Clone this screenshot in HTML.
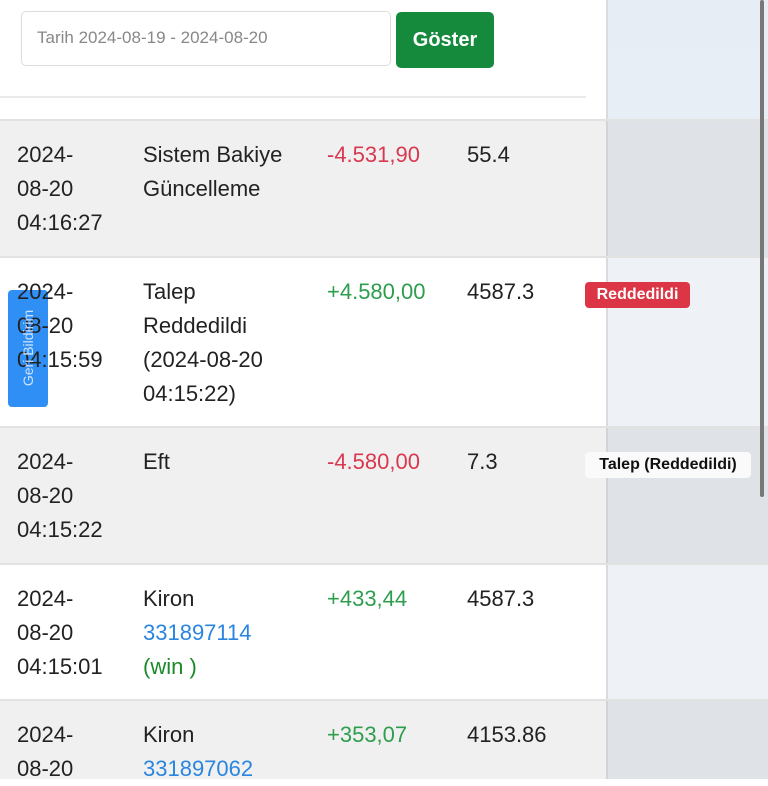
<!DOCTYPE html>
<html><head><meta charset="utf-8"><style>
*{margin:0;padding:0;box-sizing:border-box}
body{width:768px;height:768px;overflow:hidden;background:#fff;font-family:"Liberation Sans",sans-serif;position:relative;color:#222}
.panel{position:absolute;left:606px;top:0;width:162px;height:768px;background:linear-gradient(180deg,#e6edf5,#eef2f6);border-left:2px solid #d8dce1}
.row{position:absolute;left:0;width:768px;border-top:2px solid #e2e2e2}
.g{background:#f0f0f0}
.row .ov{position:absolute;left:606px;top:0;bottom:0;width:162px}
.g .ov{background:#dfe2e7;border-left:2px solid #d0d4d9}
.w .ov{background:#eef2f6;border-left:2px solid #d8dce1}
.t{position:absolute;font-size:22px;line-height:34px;z-index:3}
.red{color:#d9384f}.grn{color:#2e9e4e}.blue{color:#2a85e0}.dg{color:#1a8a2a}
</style></head><body>
<div class="panel"></div>
<div style="position:absolute;left:21px;top:11px;width:370px;height:55px;border:1.5px solid #dcdcdc;border-radius:5px;background:#fff"></div>
<div style="position:absolute;left:37px;top:28px;font-size:17px;color:#888">Tarih 2024-08-19 - 2024-08-20</div>
<div style="position:absolute;left:396px;top:12px;width:98px;height:56px;background:#158a3c;border-radius:5px;color:#fff;font-size:20px;font-weight:bold;text-align:center;line-height:56px">Göster</div>
<div style="position:absolute;left:0;top:96px;width:586px;height:2px;background:#eaeaea"></div>

<div class="row g" style="top:119px;height:138px"><div class="ov"></div>
<div class="t" style="left:17px;top:17px">2024-<br>08-20<br>04:16:27</div>
<div class="t" style="left:143px;top:17px">Sistem Bakiye<br>Güncelleme</div>
<div class="t red" style="left:327px;top:17px">-4.531,90</div>
<div class="t" style="left:467px;top:17px">55.4</div></div>

<div class="row w" style="top:256px;height:171px;background:#fff"><div class="ov"></div>
<div class="t" style="left:17px;top:17px">2024-<br>08-20<br>04:15:59</div>
<div class="t" style="left:143px;top:17px">Talep<br>Reddedildi<br>(2024-08-20<br>04:15:22)</div>
<div class="t grn" style="left:327px;top:17px">+4.580,00</div>
<div class="t" style="left:467px;top:17px">4587.3</div>
<div style="position:absolute;left:585px;top:24px;width:105px;height:26px;background:#dc3545;border-radius:4px;color:#fff;font-weight:bold;font-size:16px;text-align:center;line-height:26px">Reddedildi</div></div>

<div class="row g" style="top:426px;height:138px"><div class="ov"></div>
<div class="t" style="left:17px;top:17px">2024-<br>08-20<br>04:15:22</div>
<div class="t" style="left:143px;top:17px">Eft</div>
<div class="t red" style="left:327px;top:17px">-4.580,00</div>
<div class="t" style="left:467px;top:17px">7.3</div>
<div style="position:absolute;left:585px;top:24px;width:166px;height:26px;background:#fafafa;border-radius:4px;color:#111;font-weight:bold;font-size:16px;text-align:center;line-height:26px">Talep (Reddedildi)</div></div>

<div class="row w" style="top:563px;height:138px;background:#fff"><div class="ov"></div>
<div class="t" style="left:17px;top:17px">2024-<br>08-20<br>04:15:01</div>
<div class="t" style="left:143px;top:17px">Kiron<br><span class="blue">331897114</span><br><span class="dg">(win )</span></div>
<div class="t grn" style="left:327px;top:17px">+433,44</div>
<div class="t" style="left:467px;top:17px">4587.3</div></div>

<div class="row g" style="top:699px;height:80px"><div class="ov"></div>
<div class="t" style="left:17px;top:17px">2024-<br>08-20</div>
<div class="t" style="left:143px;top:17px">Kiron<br><span class="blue">331897062</span></div>
<div class="t grn" style="left:327px;top:17px">+353,07</div>
<div class="t" style="left:467px;top:17px">4153.86</div></div>

<div style="position:absolute;left:8px;top:290px;width:40px;height:117px;background:#2f8ff5;border-radius:4px;z-index:2"></div>
<div style="position:absolute;left:28px;top:348px;transform:translate(-50%,-50%) rotate(-90deg);color:#cfe4ff;font-size:14px;white-space:nowrap;z-index:4">Geri Bildirim</div>
<div style="position:absolute;left:760px;top:0;width:4px;height:497px;background:#777;border-radius:2px;z-index:5"></div>
</body></html>
